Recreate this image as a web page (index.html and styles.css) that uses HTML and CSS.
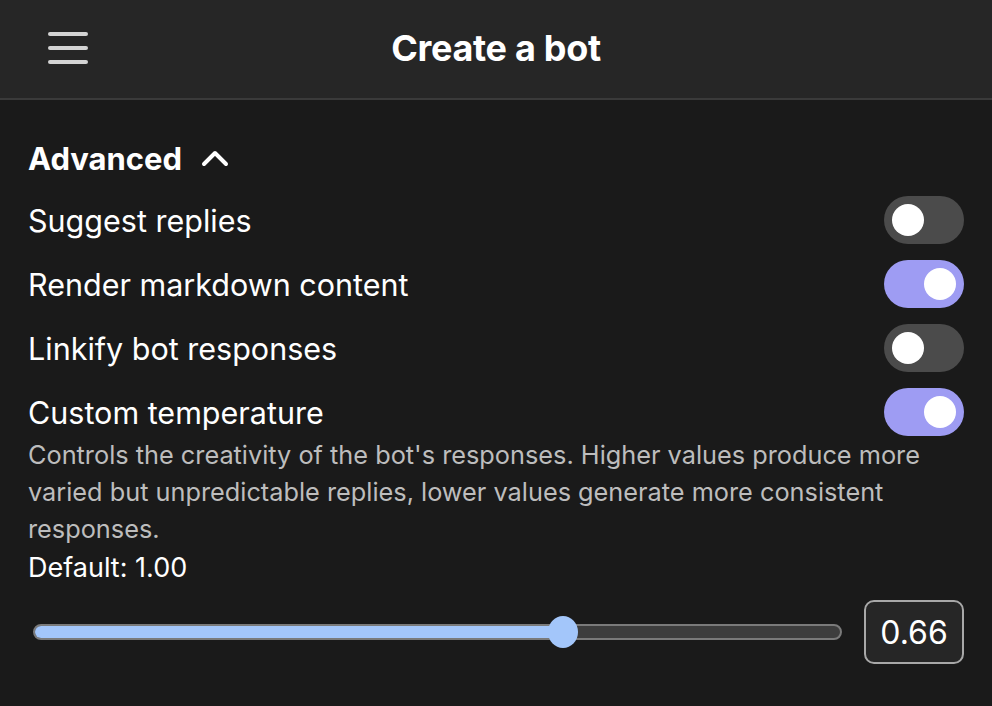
FILE: index.html
```html
<!DOCTYPE html>
<html lang="en">
<head>
    <meta charset="UTF-8">
    <meta name="viewport" content="width=device-width, initial-scale=1.0">
    <title>Create a bot</title>
    <link rel="stylesheet" href="styles.css">
</head>
<body>
    <header class="topbar">
        <button class="menu-btn" aria-label="Menu">
            <span></span><span></span><span></span>
        </button>
        <h1 class="title">Create a bot</h1>
    </header>
    <main class="content">
        <button class="section-toggle">
            Advanced
            <svg width="30" height="20" viewBox="0 0 30 20" aria-hidden="true">
                <path d="M4 16 L15 5 L26 16" fill="none" stroke="#fff" stroke-width="4" stroke-linecap="round" stroke-linejoin="round"/>
            </svg>
        </button>

        <div class="options">
            <div class="option">
                <span class="option-label">Suggest replies</span>
                <span class="switch"></span>
            </div>
            <div class="option">
                <span class="option-label">Render markdown content</span>
                <span class="switch on"></span>
            </div>
            <div class="option">
                <span class="option-label">Linkify bot responses</span>
                <span class="switch"></span>
            </div>
            <div class="option">
                <span class="option-label">Custom temperature</span>
                <span class="switch on"></span>
            </div>
        </div>

        <p class="hint">Controls the creativity of the bot's responses. Higher values produce more varied but unpredictable replies, lower values generate more consistent responses.</p>
        <p class="default-value">Default: 1.00</p>

        <div class="temp-row">
            <div class="slider">
                <div class="slider-track">
                    <div class="slider-fill" style="width: 65.5%"></div>
                </div>
                <div class="slider-thumb" style="left: 65.5%"></div>
            </div>
            <div class="temp-value">0.66</div>
        </div>
    </main>
</body>
</html>
```

FILE: styles.css
```css
* {
    box-sizing: border-box;
}

body {
    margin: 0;
    background-color: #1a1a1a;
    color: #fff;
    font-family: 'Inter', 'Noto Sans', sans-serif;
}

.topbar {
    height: 100px;
    background-color: #262626;
    border-bottom: 2px solid #3a3a3a;
    display: flex;
    align-items: center;
    justify-content: center;
    position: relative;
}

.menu-btn {
    position: absolute;
    left: 48px;
    top: 32px;
    width: 40px;
    padding: 0;
    border: none;
    background: none;
    display: flex;
    flex-direction: column;
    gap: 10px;
}

.menu-btn span {
    display: block;
    height: 4px;
    border-radius: 2px;
    background-color: #d4d4d4;
}

.title {
    margin: 0 0 2px 0;
    font-size: 36px;
    font-weight: 700;
    letter-spacing: -0.3px;
}

.content {
    padding: 38px 28px 0 28px;
}

.section-toggle {
    display: flex;
    align-items: center;
    gap: 18px;
    padding: 0;
    border: none;
    background: none;
    color: #fff;
    font-family: inherit;
    font-size: 31px;
    font-weight: 700;
    height: 40px;
    margin-bottom: 18px;
}

.options {
    display: flex;
    flex-direction: column;
    gap: 16px;
}

.option {
    display: flex;
    justify-content: space-between;
    align-items: center;
    height: 48px;
}

.option-label {
    font-size: 30.5px;
}

.switch {
    width: 80px;
    height: 48px;
    border-radius: 24px;
    background-color: #4b4b4b;
    position: relative;
}

.switch::after {
    content: "";
    position: absolute;
    top: 8px;
    left: 8px;
    width: 32px;
    height: 32px;
    border-radius: 50%;
    background-color: #fff;
}

.switch.on {
    background-color: #9e9cf3;
}

.switch.on::after {
    left: 40px;
}

.hint {
    margin: 0;
    color: #bdbdbd;
    font-size: 25.3px;
    line-height: 37px;
}

.default-value {
    margin: 3px 0 0 0;
    font-size: 27px;
    line-height: 36px;
}

.temp-row {
    display: flex;
    align-items: center;
    gap: 22px;
    margin-top: 14px;
}

.slider {
    flex: 1;
    position: relative;
    height: 32px;
    margin-left: 5px;
    display: flex;
    align-items: center;
}

.slider-track {
    width: 100%;
    height: 16px;
    border-radius: 8px;
    border: 2px solid #7a7a7a;
    background-color: #3d3d3d;
    overflow: hidden;
}

.slider-fill {
    height: 100%;
    background-color: #a3c6fa;
}

.slider-thumb {
    position: absolute;
    top: 0;
    width: 30px;
    height: 32px;
    margin-left: -15px;
    border-radius: 50%;
    background-color: #a3c6fa;
}

.temp-value {
    width: 100px;
    height: 64px;
    border: 2px solid #a8a8a8;
    border-radius: 10px;
    background-color: #262626;
    display: flex;
    align-items: center;
    justify-content: center;
    font-size: 32px;
}
```
